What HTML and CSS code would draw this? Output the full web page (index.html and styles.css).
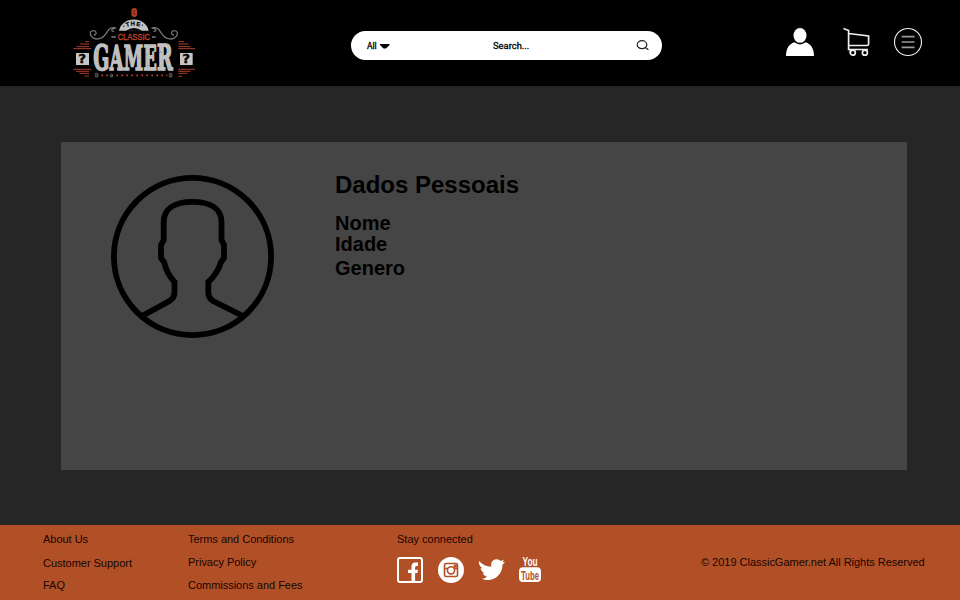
FILE: index.html
```html
<!DOCTYPE html>
<html lang="pt">
<head>
<meta charset="utf-8">
<title>The Classic Gamer</title>
<link rel="stylesheet" href="styles.css">
</head>
<body>
<header class="header">
  <svg class="logo" viewBox="0 0 420 258" role="img" aria-label="The Classic Gamer">
    <g class="red-line">
      <rect class="gem" x="204" y="26" width="13" height="23" rx="4"/>
      <path class="facet" d="M208 33h5M208 41h5"/>
      <path d="M63 125h12M48 132h27M38 140h37M28 146h54M343 125h17M343 132h30M343 140h37M343 146h50"/>
      <path d="M28 208h54M37 214h38M46 220h29M62 228h13M343 208h50M343 214h37M343 220h28M343 229h11"/>
    </g>
    <path class="fan" d="M165 92A45 39 0 0 1 254 92H234Q210 76 186 92Z"/>
    <path id="arch" class="guide" d="M174 89Q209 65 248 89"/>
    <text class="the"><textPath href="#arch" textLength="58" startOffset="7">·THE·</textPath></text>
    <path class="dots" d="M196 92h30"/>
    <g class="scroll">
      <path d="M155 84C128 76 131 111 106 116C84 122 72 99 83 93C96 88 101 102 91 105M155 84C143 85 139 94 149 94"/>
      <path d="M264 84C291 76 288 111 313 116C335 122 347 99 336 93C323 88 318 102 328 105M264 84C276 85 280 94 270 94"/>
      <path class="dash" d="M142 111h13M264 111h11"/>
    </g>
    <text class="classic" x="161" y="121" textLength="97" lengthAdjust="spacingAndGlyphs">CLASSIC</text>
    <text class="gamer" transform="translate(88 209) scale(.535 1)"><tspan class="tall">G</tspan><tspan>AME</tspan><tspan class="tall">R</tspan></text>
    <path class="wear" d="M97 151l4 5M102 184l3 4M112 203h5M150 174l3 4M193 149l3 5M197 187l2 6M223 171l3 3M246 161l3 5M250 196l4 2M289 153l3 5M303 180l4 3M313 201l4 3M101 168h3"/>
    <g class="tiles"><rect x="36" y="159" width="39" height="36"/><rect x="348" y="159" width="38" height="36"/></g>
    <g class="question"><text transform="translate(43 190) scale(1.15 1)">?</text><text transform="translate(355 190) scale(1.15 1)">?</text></g>
    <path class="beads" d="M112 226H310"/>
    <path class="bolts" d="M94 220h8v11h-8zM316 220h8v11h-8zM139 231v-8h7v8z"/>
  </svg>

  <form class="search">
    <span class="category">All</span>
    <svg class="caret" viewBox="0 0 10 5"><path d="M0 0h9.500v1L6 4.500H3.500L0 1Z"/></svg>
    <span class="placeholder">Search...</span>
    <svg class="lens" viewBox="0 0 14 12"><ellipse cx="6" cy="4.700" rx="4.800" ry="4"/><path d="M9.300 7.600l3.100 2.200"/></svg>
  </form>

  <nav class="actions">
    <svg class="user" viewBox="0 0 28 28"><ellipse cx="14" cy="7.400" rx="6.500" ry="7.400"/><path d="M0 28C0 21 3 16 8.300 14.300Q14 18.500 19.700 14.300C25 16 28 21 28 28Z"/></svg>
    <svg class="cart" viewBox="0 0 27 29"><path d="M.5 .5 5.600 2.500V21.500H25M5.600 5.500 25.600 8V16.200Q25.400 17.500 24 17.500H6M7.400 21.500v3"/><circle cx="9.800" cy="24.700" r="2.500"/><circle cx="21.900" cy="24.700" r="2.500"/></svg>
    <svg class="menu" viewBox="0 0 28 28"><circle cx="14" cy="14" r="13.500"/><path d="M7.600 8.600h13M7.600 14h13M7.600 19.400h13"/></svg>
  </nav>
</header>

<main class="main">
  <section class="profile">
    <svg class="avatar" viewBox="0 0 163 163">
      <circle cx="81.500" cy="81.500" r="78.600"/>
      <path d="M31 141L58.500 126Q63.500 123 63.500 117V107Q56 99 53 87L50 83V70L52.700 65V47C52.700 34 63 26.800 81.500 26.800S110.500 34 110.500 47V65L113 70V83L110 87Q107 98 97.300 107V117Q97.300 123 102 126L132 141"/>
    </svg>
    <div class="details">
      <h1>Dados Pessoais</h1>
      <h2 class="nome">Nome</h2>
      <h2 class="idade">Idade</h2>
      <h2 class="genero">Genero</h2>
    </div>
  </section>
</main>

<footer class="footer">
  <nav class="links about"><a>About Us</a><a class="support">Customer Support</a><a>FAQ</a></nav>
  <nav class="links legal"><a>Terms and Conditions</a><a>Privacy Policy</a><a>Commissions and Fees</a></nav>
  <div class="social">
    <span>Stay connected</span>
    <div class="networks">
      <svg class="facebook" viewBox="0 0 26 26"><rect x="1" y="1" width="24" height="24" rx="2"/><path d="M14.500 25V16H11V12.700h3.500V9.800Q14.500 5.500 18.500 5.500H21V9H19.400Q18.100 9 18.100 10.500V12.700H21L20.500 16H18.100V25Z"/></svg>
      <svg class="instagram" viewBox="0 0 26 26"><circle class="disc" cx="13" cy="13" r="13"/><rect x="6.500" y="6.500" width="13" height="13" rx="1.500"/><path d="M6.500 11.500h3.500M16 11.500h3.500M16.500 8.300h1.500v1.500h-1.500z"/><circle cx="13" cy="13.300" r="3.600"/></svg>
      <svg class="twitter" viewBox="0 0 26 22"><path d="M0 2Q5 7.500 12.300 7.800C11.500 3.300 14 .3 17.500 .3Q20 .3 21.700 2L25 .8 23.500 3.300 26 3 23.500 5.800C23.500 14.500 17 21 9 21Q5 21 3 19.800Q6 19.800 7.800 17.700Q4.500 17 3.700 14.300H5.600Q2 12.500 1.600 9.100L3.800 9.500Q-.8 7 0 2Z"/></svg>
      <svg class="youtube" viewBox="0 0 22 26"><text class="you" x="3.500" y="10" textLength="15" lengthAdjust="spacingAndGlyphs">You</text><rect y="11.300" width="22" height="14.700" rx="4"/><text class="tube" x="2" y="23.700" textLength="18" lengthAdjust="spacingAndGlyphs">Tube</text></svg>
    </div>
  </div>
  <p class="copyright">© 2019 ClassicGamer.net All Rights Reserved</p>
</footer>
</body>
</html>
```
FILE: styles.css
```css
* { box-sizing: border-box; }
body { margin: 0; width: 960px; height: 600px; display: flex; flex-direction: column; overflow: hidden; background: #262626; color: #000; font-family: "Liberation Sans", Arial, sans-serif; }
svg { display: block; flex: none; overflow: visible; }

.header { height: 86px; flex: none; display: flex; align-items: flex-start; background: #000; padding-left: 64px; }
.logo { width: 140px; height: 86px; }
.red-line { fill: none; stroke: #b8432f; stroke-width: 2.8; }
.gem { fill: #a83a2b; stroke: #d0452c; }
.facet { stroke: #4a1008; }
.fan { fill: #c2c2c2; }
.guide { fill: none; }
.the { font: bold 18px "Liberation Sans", sans-serif; fill: #000; stroke: #000; stroke-width: .6; }
.dots { stroke: #777; stroke-width: 2; stroke-dasharray: 3 6; }
.scroll { fill: none; stroke: #747474; stroke-width: 4; stroke-linecap: round; }
.scroll .dash { stroke: #bbb; stroke-width: 3; stroke-linecap: butt; }
.classic { font: 26px "Liberation Sans", sans-serif; fill: #c24631; stroke: #c24631; stroke-width: .9; }
.gamer { font: bold 98px "DejaVu Serif", serif; letter-spacing: 2px; fill: #c0c0c0; stroke: #c0c0c0; stroke-width: 5; }
.gamer .tall { font-size: 106px; }
.wear { stroke: #777; stroke-width: 2; }
.tiles { fill: #c5c5c5; }
.question { font: bold 35px "DejaVu Sans", sans-serif; fill: #000; stroke: #000; stroke-width: 1; }
.beads { stroke: #b8432f; stroke-width: 5; stroke-dasharray: 5 10; }
.bolts { fill: #333; stroke: #666; stroke-width: 2; }

.search { margin: 31px 0 0 147px; width: 311px; height: 29px; border-radius: 15px; background: #fff; display: flex; align-items: center; padding: 0 12px 0 16px; font: 9.400px Roboto, sans-serif; -webkit-text-stroke: .3px #000; }
.category { width: 13px; font-size: 8.500px; }
.caret { width: 10px; height: 5px; margin-top: 1px; }
.placeholder { margin-left: 103px; }
.lens { width: 14px; height: 12px; margin-left: auto; fill: none; stroke: #222; stroke-width: 1.200; }

.actions { display: flex; align-items: flex-start; margin: 28px 0 0 124px; }
.user { width: 28px; height: 28px; fill: #fff; }
.cart { width: 27px; height: 29px; margin-left: 29px; fill: none; stroke: #eee; stroke-width: 1.700; }
.menu { width: 28px; height: 28px; margin-left: 24px; fill: none; stroke: #eee; stroke-width: 1.100; }
.menu path { stroke: #999; stroke-width: 1.700; }

.main { height: 439px; flex: none; padding: 55px 53px 0 61px; border-top: 1px solid #202020; }
.profile { height: 328px; background: #454545; display: flex; padding: 33px 0 0 50px; }
.avatar { width: 163px; height: 163px; fill: none; stroke: #000; stroke-width: 5.800; }
.details { margin-left: 61px; }
h1, h2 { margin: 0; font-weight: bold; }
h1 { font-size: 24px; line-height: 24px; margin-top: -2px; }
h2 { font-size: 20px; line-height: 22px; }
.nome { margin-top: 15px; }
.idade { margin-top: -1px; }
.genero { margin-top: 2px; }

.footer { height: 75px; flex: none; display: flex; background: #b14f27; font-size: 11px; line-height: 14px; letter-spacing: -.02px; color: #170600; }
.links { display: flex; flex-direction: column; white-space: nowrap; padding-top: 7px; }
.about { width: 145px; margin-left: 43px; gap: 9px; }
.support { margin: 1px 0 -1px; }
.legal { width: 209px; gap: 9px; }
.social { width: 304px; padding-top: 7px; letter-spacing: 0; }
.networks { display: flex; align-items: flex-start; margin-top: 10px; }
.facebook { width: 26px; height: 26px; margin-top: 1px; fill: #fff; }
.facebook rect { fill: none; stroke: #fff; stroke-width: 2; }
.instagram { width: 26px; height: 26px; margin: 1px 0 0 15px; fill: none; stroke: #b14f27; stroke-width: 1.600; }
.disc { fill: #fff; stroke: none; }
.twitter { width: 26px; height: 22px; margin: 3px 0 0 15px; fill: #fff; }
.youtube { width: 22px; height: 26px; margin-left: 14px; fill: #fff; font-family: "Liberation Sans", sans-serif; font-weight: bold; }
.you { font-size: 13.500px; }
.tube { font-size: 13px; fill: #b14f27; }
.copyright { margin: 30px 0 0; white-space: nowrap; }
```
